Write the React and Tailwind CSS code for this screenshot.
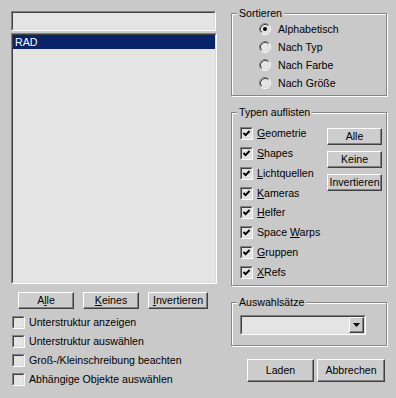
import React from "react";

// Classic Win2k-style select-by-name dialog
const BTN =
  "flex items-center justify-center bg-[#cdcdcd] border border-t-white border-l-white border-b-[#404040] border-r-[#404040] shadow-[inset_-1px_-1px_0_#808080] text-black";

const Sunken = ({ className = "", innerClass = "", children }) => (
  <div className={`flex border border-t-[#808080] border-l-[#808080] border-b-white border-r-white ${className}`}>
    <div className={`flex-1 flex border border-t-[#404040] border-l-[#404040] border-b-[#dcdcdc] border-r-[#dcdcdc] bg-[#e4e4e4] ${innerClass}`}>
      {children}
    </div>
  </div>
);

const Checkbox = ({ checked }) => (
  <Sunken className="w-[13px] h-[13px] shrink-0" innerClass="items-center justify-center">
    {checked && (
      <svg width="9" height="9" viewBox="0 0 9 9">
        <polyline points="1.5,4 3.6,6.2 7.6,2" fill="none" stroke="#000" strokeWidth="1.9" />
      </svg>
    )}
  </Sunken>
);

const Radio = ({ checked }) => (
  <svg width="12" height="12" viewBox="0 0 12 12" className="shrink-0">
    <circle cx="6" cy="6" r="4.5" fill="#e4e4e4" />
    <path d="M2.11 9.89 A5.5 5.5 0 0 1 9.89 2.11" fill="none" stroke="#808080" />
    <path d="M9.89 2.11 A5.5 5.5 0 0 1 2.11 9.89" fill="none" stroke="#fff" />
    <path d="M2.82 9.18 A4.5 4.5 0 0 1 9.18 2.82" fill="none" stroke="#404040" />
    <path d="M9.18 2.82 A4.5 4.5 0 0 1 2.82 9.18" fill="none" stroke="#dcdcdc" />
    {checked && <circle cx="6" cy="6" r="2" fill="#000" />}
  </svg>
);

const Group = ({ label, className = "", children }) => (
  <fieldset
    className={`w-full border border-[#868686] shadow-[1px_1px_0_#fff,inset_1px_1px_0_#fff] ${className}`}
  >
    <legend className="ml-[5px] px-[2px] bg-[#c9c9c9] leading-[13px]">{label}</legend>
    {children}
  </fieldset>
);

const types = [
  ["G", "eometrie"],
  ["S", "hapes"],
  ["L", "ichtquellen"],
  ["K", "ameras"],
  ["H", "elfer"],
  ["Space ", "W", "arps"],
  ["G", "ruppen"],
  ["X", "Refs"],
];

const options = [
  "Unterstruktur anzeigen",
  "Unterstruktur auswählen",
  "Groß-/Kleinschreibung beachten",
  "Abhängige Objekte auswählen",
];

export default function App() {
  return (
    <div className="w-[396px] h-[398px] bg-[#c9c9c9] flex text-[10.6px] leading-[13px] text-black font-['Liberation_Sans',Arial,sans-serif]">
      {/* left column */}
      <div className="w-[221px] pl-[11px] pt-[11px] flex flex-col">
        <Sunken className="w-[205px] h-[20px]" />
        <Sunken className="mt-[2px] w-[206px] h-[251px]" innerClass="flex-col">
          <div className="h-[14px] bg-[#0a246a] text-white pl-[2px] flex items-center">RAD</div>
        </Sunken>
        <div className="mt-[8px] pl-[7px] flex gap-[9px]">
          <button className={`${BTN} w-[56px] h-[17px]`}>
            A<span className="underline">l</span>le
          </button>
          <button className={`${BTN} w-[56px] h-[17px]`}>
            <span className="underline">K</span>eines
          </button>
          <button className={`${BTN} w-[60px] h-[17px]`}>
            <span className="underline">I</span>nvertieren
          </button>
        </div>
        <div className="mt-[4px] flex flex-col">
          {options.map((o) => (
            <div key={o} className="h-[19px] pl-[1px] flex items-center gap-[4px]">
              <Checkbox />
              <span>{o}</span>
            </div>
          ))}
        </div>
      </div>

      {/* right column */}
      <div className="ml-[10px] w-[156px] pt-[7px] flex flex-col">
        <Group label="Sortieren" className="h-[89px]">
          <div className="pl-[27px] flex flex-col">
            {["Alphabetisch", "Nach Typ", "Nach Farbe", "Nach Größe"].map((s, i) => (
              <div key={s} className="h-[18px] flex items-center gap-[7px]">
                <Radio checked={i === 0} />
                <span>{s}</span>
              </div>
            ))}
          </div>
        </Group>

        <Group label="Typen auflisten" className="mt-[10px] h-[180px]">
          <div className="flex">
            <div className="pl-[8px] pt-[5px] flex flex-col">
              {types.map((t, i) => (
                <div key={i} className="h-[19.75px] flex items-center gap-[4px]">
                  <Checkbox checked />
                  {t.length === 2 ? (
                    <span>
                      <span className="underline">{t[0]}</span>
                      {t[1]}
                    </span>
                  ) : (
                    <span>
                      {t[0]}
                      <span className="underline">{t[1]}</span>
                      {t[2]}
                    </span>
                  )}
                </div>
              ))}
            </div>
            <div className="ml-auto pr-[4px] pt-[9px] flex flex-col gap-[6px]">
              <button className={`${BTN} w-[55px] h-[17px]`}>Alle</button>
              <button className={`${BTN} w-[55px] h-[17px]`}>Keine</button>
              <button className={`${BTN} w-[55px] h-[17px]`}>Invertieren</button>
            </div>
          </div>
        </Group>

        <Group label="Auswahlsätze" className="mt-[10px] h-[50px]">
          <Sunken className="mt-[6px] ml-[8px] w-[126px] h-[20px]" innerClass="justify-end">
            <div className={`${BTN} w-[15px] h-full`}>
              <svg width="7" height="4" viewBox="0 0 7 4">
                <polygon points="0,0 7,0 3.5,4" fill="#000" />
              </svg>
            </div>
          </Sunken>
        </Group>

        <div className="mt-[13px] ml-[16px] flex gap-[3px]">
          <button className={`${BTN} w-[67px] h-[23px]`}>Laden</button>
          <button className={`${BTN} w-[68px] h-[23px]`}>Abbrechen</button>
        </div>
      </div>
    </div>
  );
}
